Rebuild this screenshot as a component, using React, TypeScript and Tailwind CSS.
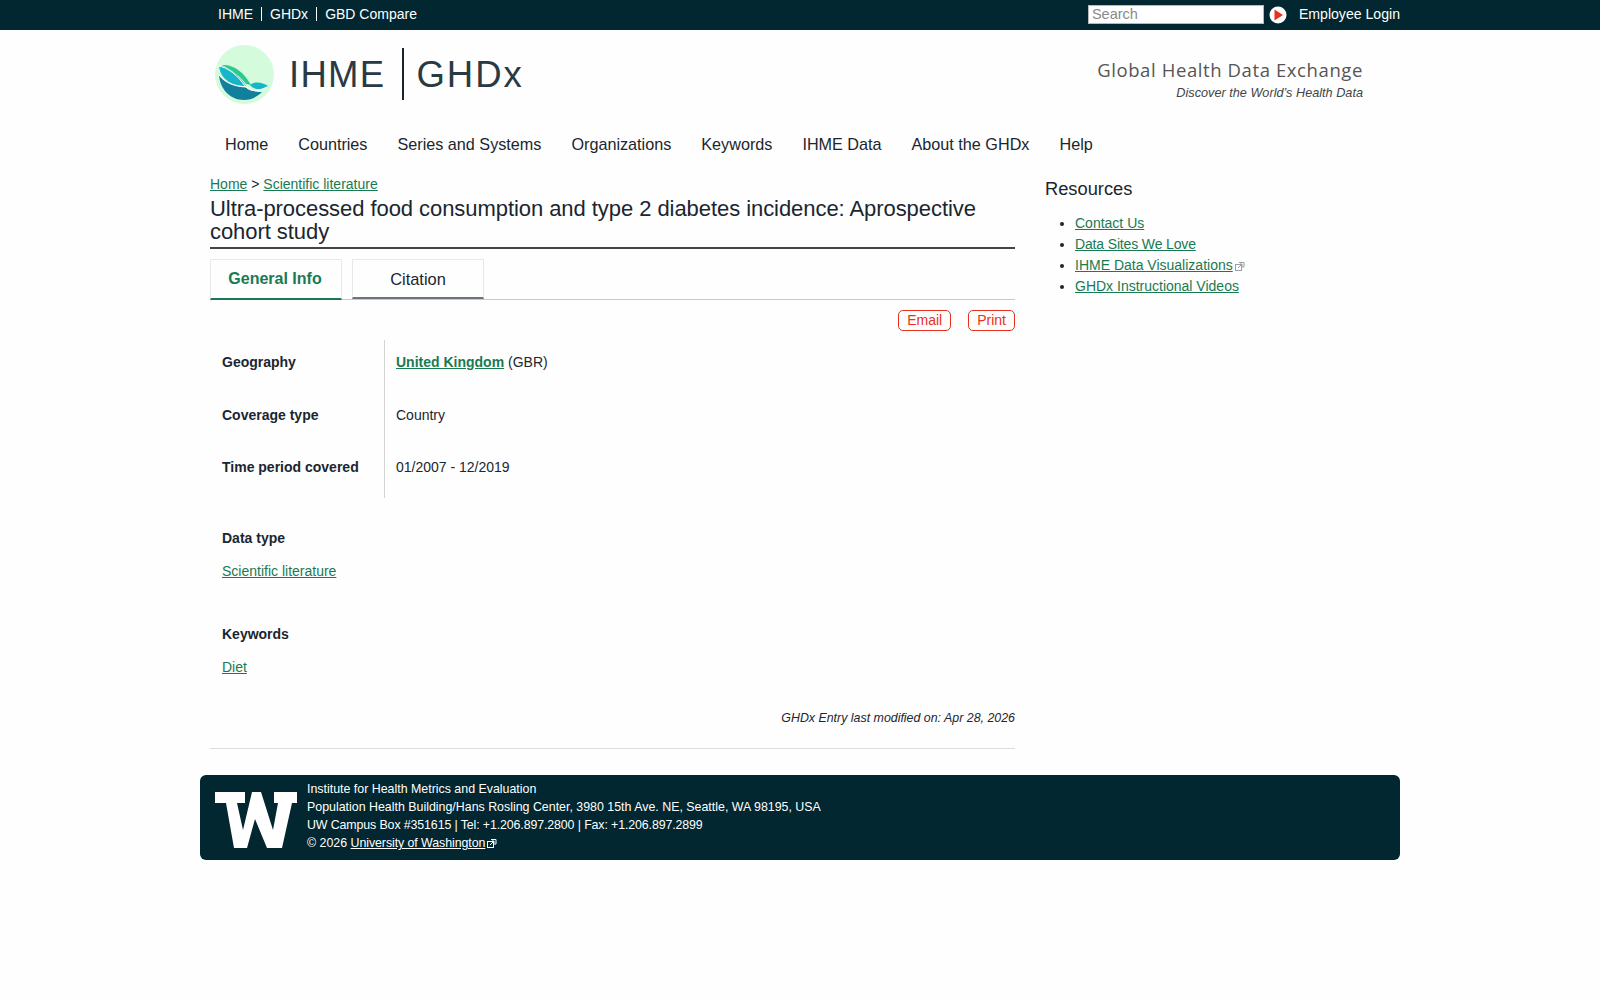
import React from "react";

const font = "font-['Liberation_Sans',Arial,sans-serif]";

function Ext({ light = false }: { light?: boolean }) {
  const c = light ? "#ffffff" : "#9aa0a0";
  return (
    <svg width="10" height="10" viewBox="0 0 10 10" className="inline-block ml-[2px] align-[-1px]" fill="none" stroke={c} strokeWidth="1">
      <rect x="0.5" y="3.5" width="6" height="6" />
      <path d="M4 1.5h5v4.5h-2" />
      <path d="M3 7l4-4M5 3h2v2" />
    </svg>
  );
}

function A({ children, className = "" }: { children: React.ReactNode; className?: string }) {
  return <a href="#" className={`text-[#197a52] underline ${className}`}>{children}</a>;
}

function Row({ label, h, children }: { label: string; h: string; children: React.ReactNode }) {
  return (
    <div className={`flex ${h}`}>
      <div className="w-[174px] pl-3 pt-[12px] font-bold">{label}</div>
      <div className="flex-1 border-l border-[#d4d4d4] pl-[11px] pt-[12px]">{children}</div>
    </div>
  );
}

const nav = ["Home", "Countries", "Series and Systems", "Organizations", "Keywords", "IHME Data", "About the GHDx", "Help"];

export default function App() {
  return (
    <div className={`${font} min-h-[1000px] bg-[#fefefe] text-[#1a2630] text-[14px] leading-[20px]`}>
      <div className="h-[30px] bg-[#022730] text-white">
        <div className="w-[1200px] ml-[200px] h-full flex items-center justify-between">
          <div className="flex items-center pl-[10px] text-[14px] mt-[-2px]">
            <a className="pl-[8px] pr-[8px] leading-[14px] border-r border-white">IHME</a>
            <a className="px-[8px] leading-[14px] border-r border-white">GHDx</a>
            <a className="px-[8px] leading-[14px]">GBD Compare</a>
          </div>
          <div className="flex items-center mt-[-1px]">
            <div className="w-[176px] h-[19px] bg-white border border-[#b8b8b8] text-[#8a8a8a] pl-[3px] leading-[17px] text-[14.5px] ml-[1px]">Search</div>
            <svg width="18" height="18" viewBox="0 0 18 18" className="ml-[5px]">
              <circle cx="9" cy="9" r="8.5" fill="#fff" />
              <path d="M5.5 3.5L14 9L5.5 14.5Z" fill="#e8301c" />
            </svg>
            <a className="ml-[12px] text-[14.1px] mt-[-1px]">Employee Login</a>
          </div>
        </div>
      </div>

      <div className="w-[1200px] ml-[200px]">
        <div className="h-[102px] flex items-start justify-between pl-[15px] pr-[37px]">
          <div className="flex items-start pt-[15px]">
            <svg width="59" height="59" viewBox="0 0 59 59" className="shrink-0">
              <circle cx="29.5" cy="29.5" r="29.5" fill="#d4fbdc" />
              <path d="M4 30 C8 36 20 42 30 42 C36 46 41 47 47 47 C42 52 36 55 29 55 C15 55 5 44 4 30Z" fill="#127f9c" />
              <path d="M4 21 L7 21 C14 24 24 30 31 41 C20 41 6 37 4 21Z" fill="#17b5c8" />
              <path d="M7 20 C18 19 29 27 36 40 L31 39 C26 32 18 26 7 20Z" fill="#2cc98c" />
              <path d="M35 40 C40 36 47 37 53 41 C48 45 40 46 35 40Z" fill="#17b5c8" />
              <path d="M3 21 C13 22 23 31 30 41 C35 47 42 47 52 42" fill="none" stroke="#fff" strokeWidth="1" />
              <path d="M4 30 C10 38 20 42 33 42" fill="none" stroke="#fff" strokeWidth="1" />
            </svg>
            <span className="ml-[15px] mt-[10px] text-[36.5px] leading-[40px] tracking-[1.3px] text-[#2a3a44]">IHME</span>
            <div className="ml-[17px] mt-[3px] w-[2px] h-[52px] bg-[#15262f]" />
            <span className="ml-[12px] mt-[10px] text-[36.5px] leading-[40px] tracking-[2px] text-[#2a3a44]">GHDx</span>
          </div>
          <div className="text-right pt-[27px]">
            <div className="text-[18.5px] leading-[26px] font-['Open_Sans',sans-serif] text-[#555] tracking-[0.6px]">Global Health Data Exchange</div>
            <div className="text-[12.7px] leading-[18px] mt-[1px] italic text-[#444]">Discover the World’s Health Data</div>
          </div>
        </div>

        <div className="flex h-[24px] pl-[25px] gap-[30px] text-[16.2px] leading-[24px]">
          {nav.map((n) => <a key={n}>{n}</a>)}
        </div>

        <div className="flex mt-[18px] pl-[10px]">
          <div className="w-[805px]">
            <div className="leading-[20px]"><A>Home</A> &gt; <A>Scientific literature</A></div>
            <h1 className="text-[22px] leading-[23px] mt-[3px] pb-[4px] border-b-2 border-[#444] tracking-[-0.06px]">
              Ultra-processed food consumption and type 2 diabetes incidence: Aprospective cohort study
            </h1>
            <div className="flex gap-[10px] mt-[10px] h-[41px] border-b border-[#c8c8c8] text-[16.4px]">
              <div className="w-[132px] h-[41px] border border-[#e8e8e8] border-b-2 border-b-[#197a52] font-bold text-[#197a52] text-center leading-[38px] pr-[2px] text-[16px]">General Info</div>
              <div className="w-[132px] h-[40px] border border-[#e8e8e8] border-b-2 border-b-[#6b7280] text-center leading-[38px]">Citation</div>
            </div>
            <div className="flex justify-end gap-[17px] mt-[10px] text-[14px] text-[#e8301c]">
              <a className="h-[21px] px-[8px] leading-[19px] border border-[#e8301c] rounded-[5px]">Email</a>
              <a className="h-[21px] px-[8px] leading-[19px] border border-[#e8301c] rounded-[5px]">Print</a>
            </div>
            <div className="mt-[9px]">
              <Row label="Geography" h="h-[53px]"><A className="font-bold">United Kingdom</A> (GBR)</Row>
              <Row label="Coverage type" h="h-[52px]">Country</Row>
              <Row label="Time period covered" h="h-[53px]">01/2007 - 12/2019</Row>
            </div>
            <div className="pl-3 mt-[30px] font-bold">Data type</div>
            <div className="pl-3 mt-[13px]"><A>Scientific literature</A></div>
            <div className="pl-3 mt-[43px] font-bold">Keywords</div>
            <div className="pl-3 mt-[13px]"><A>Diet</A></div>
            <div className="text-right italic text-[12.4px] mt-[31px]">GHDx Entry last modified on: Apr 28, 2026</div>
            <div className="border-b border-[#dcdcdc] mt-[20px]" />
          </div>
          <div className="ml-[30px] flex-1">
            <h2 className="text-[18.3px] leading-[24px] mt-[3px]">Resources</h2>
            <ul className="list-disc pl-[30px] mt-[12px] leading-[21px]">
              <li><A>Contact Us</A></li>
              <li><A className="tracking-[-0.15px]">Data Sites We Love</A></li>
              <li><A>IHME Data Visualizations</A><Ext /></li>
              <li><A>GHDx Instructional Videos</A></li>
            </ul>
          </div>
        </div>

        <div className="mt-[26px] h-[85px] bg-[#022730] rounded-[6px] text-white flex text-[12.4px] leading-[18px]">
          <svg width="82" height="56" viewBox="0 0 82 56" className="ml-[15px] mt-[17px] shrink-0">
            <path d="M0 0H30V11H22L28 38L37 0H46L58 38L63 11H59V0H82V11H77L67 56H52L40 27L32 56H19L11 11H0Z" fill="#fff" />
          </svg>
          <div className="ml-[10px] pt-[5px]">
            <div>Institute for Health Metrics and Evaluation</div>
            <div>Population Health Building/Hans Rosling Center, 3980 15th Ave. NE, Seattle, WA 98195, USA</div>
            <div className="tracking-[-0.12px]">UW Campus Box #351615 | Tel: +1.206.897.2800 | Fax: +1.206.897.2899</div>
            <div>© 2026 <a className="underline tracking-[-0.08px]">University of Washington</a><Ext light /></div>
          </div>
        </div>
      </div>
    </div>
  );
}
